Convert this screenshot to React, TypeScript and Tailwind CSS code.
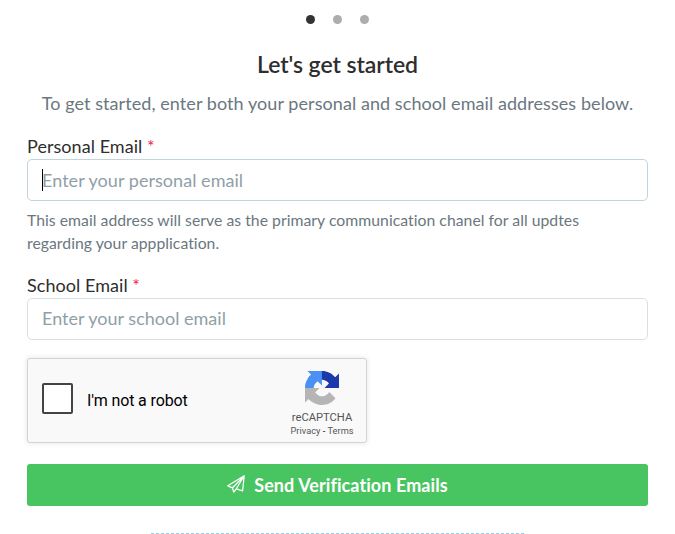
import { useState } from 'react';

const RecaptchaLogo = () => (
  <svg viewBox="0 0 64 64" className="h-[34px] w-[34px]">
    <path
      fill="#1c3aa9"
      d="M64 31.955l-.033-1.37V4.687l-7.16 7.16C50.948 4.674 42.033.093 32.05.093c-10.389 0-19.622 4.96-25.458 12.64l11.736 11.86a15.55 15.55 0 0 1 4.754-5.334c2.05-1.6 4.952-2.906 8.968-2.906.485 0 .86.057 1.135.163 4.976.393 9.288 3.14 11.828 7.124l-8.307 8.307L64 31.953"
    />
    <path
      fill="#4a90f5"
      d="M31.862.094l-1.37.033H4.594l7.16 7.16C4.58 13.147 0 22.06 0 32.046c0 10.388 4.96 19.622 12.64 25.458L24.5 45.768a15.55 15.55 0 0 1-5.334-4.754c-1.6-2.05-2.906-4.952-2.906-8.968 0-.485.057-.86.163-1.135.393-4.976 3.14-9.288 7.124-11.828l8.307 8.307L31.86.095"
    />
    <path
      fill="#b5b5b5"
      d="M.001 32.045l.033 1.37v25.898l7.16-7.16c5.86 7.173 14.774 11.754 24.76 11.754 10.388 0 19.622-4.96 25.458-12.64l-11.736-11.86a15.55 15.55 0 0 1-4.754 5.334c-2.05 1.6-4.952 2.906-8.968 2.906-.485 0-.86-.057-1.135-.163-4.976-.393-9.288-3.14-11.828-7.124l8.307-8.307c-10.522.04-22.4.066-27.295-.005"
    />
  </svg>
);

const PaperPlane = () => (
  <svg
    viewBox="0 0 18 18"
    className="-mt-[2px] h-[18px] w-[18px]"
    fill="none"
    stroke="currentColor"
    strokeWidth="1.25"
    strokeLinejoin="round"
  >
    <path d="M17.2.8L.8 10.8l4.7 2L17.2.8zM17.2.8l-1.6 15.1-6.3-2.1L17.2.8zM5.5 12.8l1.2 4.4 2.6-3.4" />
  </svg>
);

export default function SchoolVerification() {
  const [personal, setPersonal] = useState('');
  const [school, setSchool] = useState('');

  return (
    <div className="flex h-[534px] flex-col bg-white px-[27px] font-['Lato',sans-serif] text-[#2e2e2e] [font-variant-ligatures:none]">
      {/* Steps */}
      <div className="mt-[15px] flex justify-center gap-[18px]">
        <span className="h-[9px] w-[9px] rounded-full bg-[#333]" />
        <span className="h-[9px] w-[9px] rounded-full bg-[#adadad]" />
        <span className="h-[9px] w-[9px] rounded-full bg-[#adadad]" />
      </div>

      <h1 className="mt-[24px] text-center text-[23px] leading-[32px] font-semibold tracking-[-0.07px]">
        Let's get started
      </h1>
      <p className="mt-[10px] text-center text-[18px] leading-[26px] tracking-[0.07px] whitespace-nowrap text-[#6b7780]">
        To get started, enter both your personal and school email addresses below.
      </p>

      <label htmlFor="personal" className="mt-[18px] mb-px text-[18px] leading-[24px] tracking-[0.05px]">
        Personal Email <span className="text-[#f5224b]">*</span>
      </label>
      <div className="relative">
        <input
          id="personal"
          value={personal}
          onChange={(e) => setPersonal(e.target.value)}
          placeholder="Enter your personal email"
          className="block h-[42px] w-[621px] rounded-[5px] border border-[#c3d3dc] px-[14px] pb-px text-[18px] tracking-[0.04px] placeholder:text-[#8f9fa7]"
        />
        <span className="absolute top-[10px] left-[15px] h-[22px] w-px bg-black" />
      </div>
      <p className="mt-[7px] mb-px w-[600px] text-[15.75px] leading-[23px] tracking-[0.03px] text-[#6b7780]">
        This email address will serve as the primary communication chanel for all updtes
        <br />
        regarding your appplication.
      </p>

      <label htmlFor="school" className="mt-[18px] mb-px text-[18px] leading-[24px] tracking-[0.05px]">
        School Email <span className="text-[#f5224b]">*</span>
      </label>
      <input
        id="school"
        value={school}
        onChange={(e) => setSchool(e.target.value)}
        placeholder="Enter your school email"
        className="block h-[42px] w-[621px] rounded-[5px] border border-[#d5e0e7] px-[14px] pb-[2px] text-[18px] placeholder:text-[#8f9fa7]"
      />

      {/* reCAPTCHA */}
      <div className="mt-[18px] flex h-[85px] w-[340px] shrink-0 rounded-[3px] border border-[#d3d3d3] bg-[#f9f9f9] font-['Roboto',sans-serif] shadow-[0_0_4px_1px_rgba(0,0,0,0.08)]">
        <button className="mt-[24px] ml-[14px] h-[31px] w-[31px] rounded-[2px] border-2 border-[#444] bg-white" />
        <span className="mt-[32px] ml-[14px] text-[16px] leading-[20px] tracking-[-0.13px] text-black">
          I'm not a robot
        </span>
        <div className="mt-[12px] mr-[12px] ml-auto flex w-[64px] flex-col items-center text-[#555]">
          <RecaptchaLogo />
          <span className="mt-[6px] text-[11.2px] leading-[14px]">reCAPTCHA</span>
          <span className="-mt-px text-[9.2px] leading-[13px] tracking-[0.05px] whitespace-nowrap">
            Privacy <span className="text-black">-</span> Terms
          </span>
        </div>
      </div>

      <button className="mt-[21px] flex h-[42px] w-[621px] shrink-0 items-center justify-center gap-[9px] rounded-[3px] bg-[#48c561] text-[18px] font-bold tracking-[0.08px] text-white">
        <PaperPlane />
        Send Verification Emails
      </button>

      <div className="mt-[27px] ml-[124px] w-[373px] border-t border-dashed border-[#8fd0ee]" />
    </div>
  );
}
